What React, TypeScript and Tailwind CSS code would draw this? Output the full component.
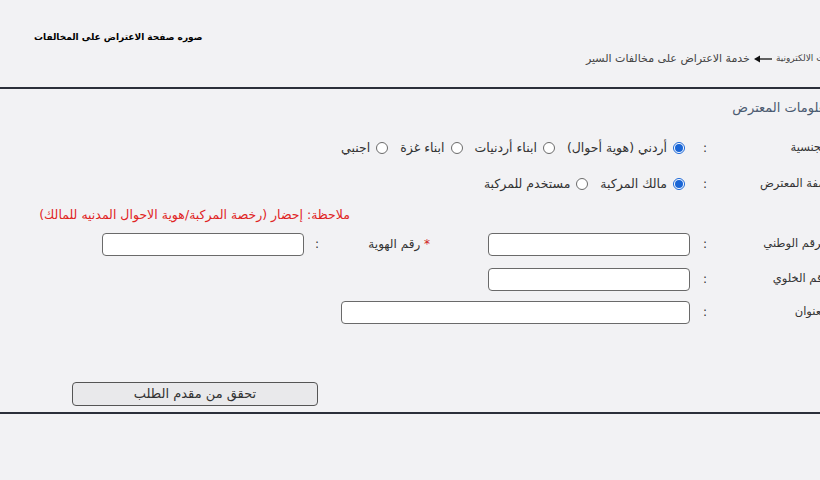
import React from "react";

function Radio({ checked, label }: { checked?: boolean; label: string }) {
  return (
    <label className="flex items-center gap-[6px]">
      <span
        className={
          "w-[12px] h-[12px] rounded-full border flex items-center justify-center bg-white " +
          (checked ? "border-[#1a66d6]" : "border-[#6b6b6b]")
        }
      >
        {checked && <span className="w-[8px] h-[8px] rounded-full bg-[#1a66d6]" />}
      </span>
      <span className="text-[12.5px]">{label}</span>
    </label>
  );
}

function Row({ label, children, className = "" }: { label: string; children: React.ReactNode; className?: string }) {
  return (
    <div className={"flex items-center " + className}>
      <div className="w-[116px] text-right text-[11.5px]">{label}</div>
      <div className="w-[14px] text-center">:</div>
      <div className="mr-[8px] flex items-center">{children}</div>
    </div>
  );
}

const Input = ({ w }: { w: string }) => (
  <div className={"h-[23px] bg-white border border-[#6a6a6a] rounded-[4px] " + w} />
);

export default function App() {
  return (
    <div className="w-[820px] h-[480px] overflow-hidden bg-[#f2f2f4]" dir="ltr">
      <div
        dir="rtl"
        className="w-[880px] text-[#333] text-[12px]"
        style={{ fontFamily: '"DejaVu Sans", sans-serif' }}
      >
        <div className="pt-[30px] h-[48px] text-left pl-[34px] text-[9px] font-bold text-black leading-[14px]">
          صوره صفحة الاعتراض على المخالفات
        </div>
        <div className="h-[22px] flex items-center pr-[32px] gap-[4px] text-[#444]">
          <span className="text-[9px]">الخدمات الالكترونية</span>
          <svg width="18" height="8" viewBox="0 0 18 8">
            <path d="M5 4 H18" stroke="#111" strokeWidth="1.3" />
            <path d="M0 4 L6 0.5 L6 7.5 Z" fill="#111" />
          </svg>
          <span className="text-[11px]">خدمة الاعتراض على مخالفات السير</span>
        </div>
        <div className="h-[17px]" />
        <div className="h-[2px] bg-[#2b2f3a]" />
        <div className="h-[38px] flex items-center pr-[48px] text-[13px] text-[#4b5a70]">معلومات المعترض</div>
        <div className="pr-[52px]">
          <Row label="الجنسية" className="h-[22px] mt-[10px]">
            <div className="flex items-center gap-[12px] mr-[5px]">
              <Radio checked label="أردني (هوية أحوال)" />
              <Radio label="ابناء أردنيات" />
              <Radio label="ابناء غزة" />
              <Radio label="اجنبي" />
            </div>
          </Row>
          <Row label="صفة المعترض" className="h-[22px] mt-[14px]">
            <div className="flex items-center gap-[12px] mr-[5px]">
              <Radio checked label="مالك المركبة" />
              <Radio label="مستخدم للمركبة" />
            </div>
          </Row>
          <div className="h-[20px] mt-[10px] flex items-center pr-[478px] text-[12.5px] text-[#e02424]">
            ملاحظة: إحضار (رخصة المركبة/هوية الاحوال المدنيه للمالك)
          </div>
          <Row label="الرقم الوطني" className="h-[24px] mt-[7px]">
            <Input w="w-[202px]" />
            <div className="w-[106px] mr-[58px] text-right">
              <span className="text-[#d02020]">*</span> رقم الهوية
            </div>
            <div className="w-[14px] text-center">:</div>
            <div className="mr-[6px]">
              <Input w="w-[202px]" />
            </div>
          </Row>
          <Row label="رقم الخلوي" className="h-[24px] mt-[11px]">
            <Input w="w-[202px]" />
          </Row>
          <Row label="العنوان" className="h-[24px] mt-[9px]">
            <Input w="w-[349px]" />
          </Row>
        </div>
        <div className="h-[58px]" />
        <div className="flex justify-end pl-[72px]">
          <div className="w-[246px] h-[24px] rounded-[4px] border border-[#555] bg-[#e9e9eb] flex items-center justify-center text-[13px] text-[#333]">
            تحقق من مقدم الطلب
          </div>
        </div>
        <div className="h-[6px]" />
        <div className="h-[2px] bg-[#2b2f3a]" />
      </div>
    </div>
  );
}
